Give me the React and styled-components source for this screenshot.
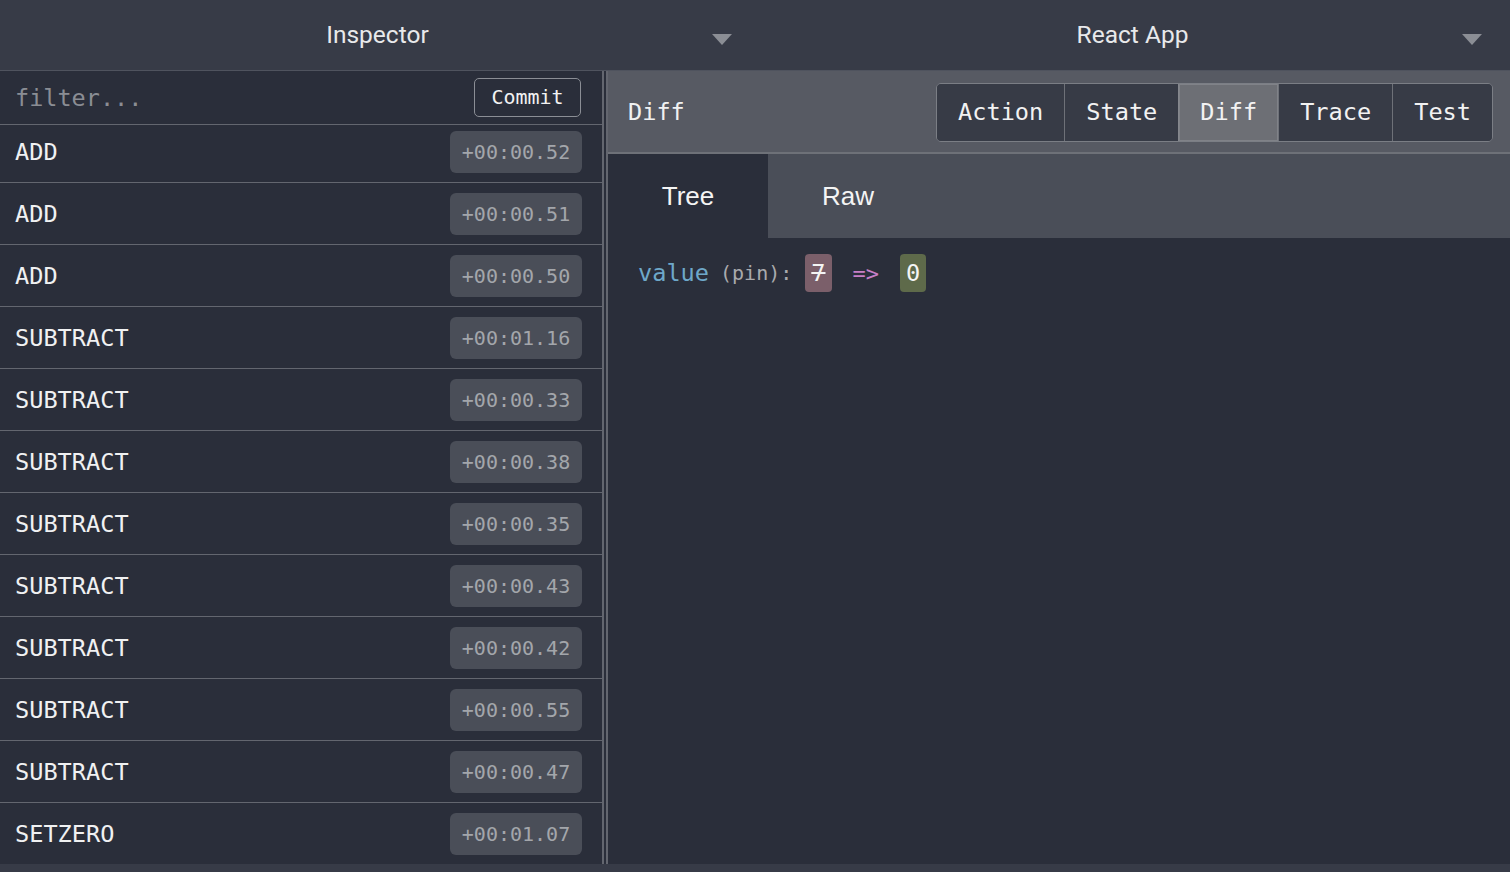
import React, { useEffect, useRef } from 'react';
import styled, { createGlobalStyle } from 'styled-components';

const mono = `"DejaVu Sans Mono", "Liberation Mono", monospace`;

const GlobalStyle = createGlobalStyle`
  html, body {
    margin: 0;
    padding: 0;
    background: #373b47;
    overflow: hidden;
  }
  * { box-sizing: border-box; }
`;

const Page = styled.div`
  width: 1510px;
  height: 872px;
  display: flex;
  flex-direction: column;
  background: #373b47;
`;

const Header = styled.div`
  height: 71px;
  display: flex;
  border-bottom: 1px solid #4f535e;
  flex-shrink: 0;
`;

const HeaderHalf = styled.div`
  flex: 1;
  display: grid;
  grid-template-columns: 1fr auto 1fr;
  align-items: center;
`;

const Title = styled.div`
  grid-column: 2;
  font-family: Roboto, "Liberation Sans", sans-serif;
  font-size: 24.5px;
  color: #e8e9eb;
  padding-bottom: 2px;
`;

const CaretBox = styled.div`
  grid-column: 3;
  justify-self: end;
  display: flex;
  margin-top: 8px;
  margin-right: ${p => p.$gap}px;
`;

const Caret = ({ gap }) => (
  <CaretBox $gap={gap}>
    <svg width="20" height="11" viewBox="0 0 20 11">
      <polygon points="0,0 20,0 10,11" fill="#8b8e95" />
    </svg>
  </CaretBox>
);

const Body = styled.div`
  height: 793px;
  display: flex;
  flex-shrink: 0;
  background: #2a2e3a;
`;

const LeftPanel = styled.div`
  width: 604px;
  display: flex;
  flex-direction: column;
  border-right: 2px solid #63666f;
`;

const FilterBar = styled.div`
  height: 54px;
  display: flex;
  align-items: center;
  justify-content: space-between;
  padding: 0 21px 0 15px;
  border-bottom: 1px solid #63666f;
  flex-shrink: 0;
`;

const FilterInput = styled.input`
  background: transparent;
  border: none;
  outline: none;
  font-family: ${mono};
  font-size: 23.5px;
  color: #e8e9eb;
  width: 300px;
  padding: 0;
  &::placeholder { color: #8a8d94; }
`;

const CommitButton = styled.button`
  height: 39px;
  width: 107px;
  margin-top: -1px;
  background: transparent;
  border: 1px solid #8b8e95;
  border-radius: 5px;
  color: #f2f2f2;
  font-family: ${mono};
  font-size: 20px;
  padding: 0;
  cursor: pointer;
`;

const List = styled.div`
  flex: 1;
  overflow: hidden;
`;

const Row = styled.div`
  height: 62px;
  display: flex;
  align-items: center;
  justify-content: space-between;
  padding: 0 20px 0 15px;
  border-bottom: 1px solid #63666f;
`;

const ActionName = styled.span`
  font-family: ${mono};
  font-size: 23.6px;
  color: #f0f1f2;
`;

const Time = styled.span`
  height: 42px;
  width: 132px;
  display: flex;
  align-items: center;
  justify-content: center;
  border-radius: 6px;
  background: #4a4e58;
  color: #a3a6ab;
  font-family: ${mono};
  font-size: 20px;
`;

const Gap = styled.div`
  width: 2px;
`;

const RightPanel = styled.div`
  flex: 1;
  display: flex;
  flex-direction: column;
  border-left: 2px solid #63666f;
`;

const TopBar = styled.div`
  height: 83px;
  display: flex;
  align-items: center;
  justify-content: space-between;
  padding: 1px 17px 0 20px;
  background: #575a63;
  border-bottom: 2px solid #6e7178;
  flex-shrink: 0;
`;

const PaneTitle = styled.div`
  font-family: ${mono};
  font-size: 23.6px;
  color: #f0f1f2;
`;

const ButtonGroup = styled.div`
  display: flex;
  height: 59px;
  border: 1px solid #7b7e85;
  border-radius: 5px;
  overflow: hidden;
`;

const GroupButton = styled.button`
  background: ${p => (p.$active ? '#6d6f75' : '#373b46')};
  border: none;
  border-left: 1px solid ${p => (p.$active ? '#85878d' : '#6e7178')};
  box-shadow: ${p => (p.$active ? 'inset 0 0 0 1px #808288' : 'none')};
  color: #f2f2f2;
  font-family: ${mono};
  font-size: 23.6px;
  padding: 0 21px;
  cursor: pointer;
  &:first-child { border-left: none; }
`;

const TabBar = styled.div`
  height: 84px;
  display: flex;
  background: #4a4e58;
  flex-shrink: 0;
`;

const Tab = styled.div`
  width: 160px;
  display: flex;
  align-items: center;
  justify-content: center;
  background: ${p => (p.$active ? '#2a2e3a' : 'transparent')};
  color: #f4f4f4;
  font-family: "Liberation Sans", Arial, sans-serif;
  font-size: 26px;
`;

const DiffContent = styled.div`
  padding: 16px 30px;
`;

const DiffLine = styled.div`
  display: flex;
  align-items: center;
  height: 38px;
  font-family: ${mono};
`;

const Key = styled.span`
  color: #6ea8c9;
  font-size: 23.6px;
`;

const Note = styled.span`
  color: #a9aaad;
  font-size: 20px;
  margin-left: 11px;
`;

const Colon = styled.span`
  color: #a9aaad;
  font-size: 20px;
  margin-right: 13px;
`;

const ValuePill = styled.span`
  height: 38px;
  min-width: 26px;
  display: inline-flex;
  align-items: center;
  justify-content: center;
  border-radius: 4px;
  padding: 0 6px;
  color: #f4f4f4;
  font-size: 23.6px;
  background: ${p => (p.$removed ? '#7b5f6a' : '#5e6a4a')};
  text-decoration: ${p => (p.$removed ? 'line-through' : 'none')};
`;

const Arrow = styled.span`
  color: #c77fc6;
  font-size: 22px;
  margin: 0 21px;
`;

const BottomStrip = styled.div`
  flex: 1;
  background: #373b47;
`;

const actions = [
  ['ADD', '+00:00.52'],
  ['ADD', '+00:00.51'],
  ['ADD', '+00:00.50'],
  ['SUBTRACT', '+00:01.16'],
  ['SUBTRACT', '+00:00.33'],
  ['SUBTRACT', '+00:00.38'],
  ['SUBTRACT', '+00:00.35'],
  ['SUBTRACT', '+00:00.43'],
  ['SUBTRACT', '+00:00.42'],
  ['SUBTRACT', '+00:00.55'],
  ['SUBTRACT', '+00:00.47'],
  ['SETZERO', '+00:01.07'],
];

const tabs = ['Action', 'State', 'Diff', 'Trace', 'Test'];

export default function App() {
  const listRef = useRef(null);

  // the action list is scrolled a few pixels down in the capture
  useEffect(() => {
    if (listRef.current) listRef.current.scrollTop = 4;
  }, []);

  return (
    <Page>
      <GlobalStyle />
      <Header>
        <HeaderHalf>
          <Title>Inspector</Title>
          <Caret gap={23} />
        </HeaderHalf>
        <HeaderHalf>
          <Title>React App</Title>
          <Caret gap={28} />
        </HeaderHalf>
      </Header>
      <Body>
        <LeftPanel>
          <FilterBar>
            <FilterInput placeholder="filter..." />
            <CommitButton>Commit</CommitButton>
          </FilterBar>
          <List ref={listRef}>
            {actions.map(([name, time], i) => (
              <Row key={i}>
                <ActionName>{name}</ActionName>
                <Time>{time}</Time>
              </Row>
            ))}
          </List>
        </LeftPanel>
        <Gap />
        <RightPanel>
          <TopBar>
            <PaneTitle>Diff</PaneTitle>
            <ButtonGroup>
              {tabs.map(t => (
                <GroupButton key={t} $active={t === 'Diff'}>{t}</GroupButton>
              ))}
            </ButtonGroup>
          </TopBar>
          <TabBar>
            <Tab $active>Tree</Tab>
            <Tab>Raw</Tab>
          </TabBar>
          <DiffContent>
            <DiffLine>
              <Key>value</Key>
              <Note>(pin)</Note>
              <Colon>:</Colon>
              <ValuePill $removed>7</ValuePill>
              <Arrow>=&gt;</Arrow>
              <ValuePill>0</ValuePill>
            </DiffLine>
          </DiffContent>
        </RightPanel>
      </Body>
      <BottomStrip />
    </Page>
  );
}
